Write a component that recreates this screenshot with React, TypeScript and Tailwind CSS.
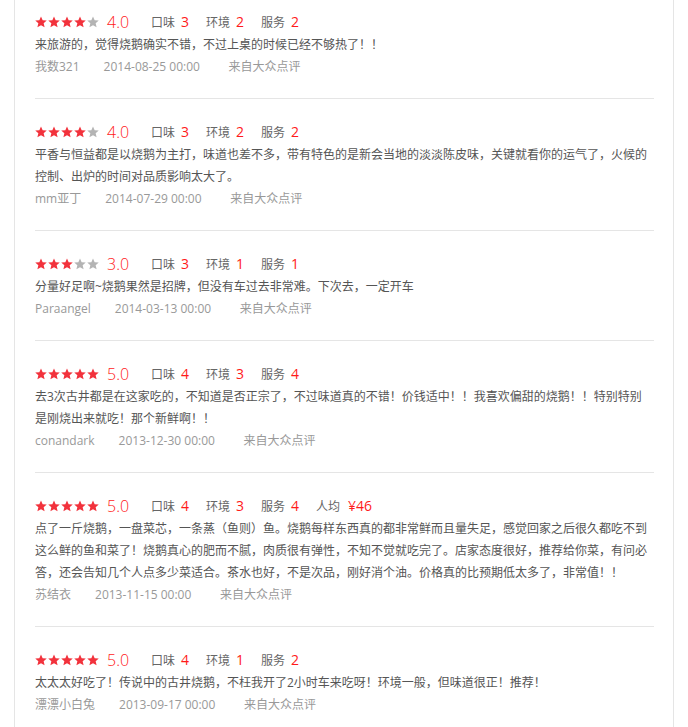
import React from "react";

type Review = {
  score: number;
  taste: number;
  env: number;
  service: number;
  avg?: string;
  lines: string[];
  author: string;
  date: string;
};

const reviews: Review[] = [
  {
    score: 4,
    taste: 3,
    env: 2,
    service: 2,
    lines: ["来旅游的，觉得烧鹅确实不错，不过上桌的时候已经不够热了！！"],
    author: "我数321",
    date: "2014-08-25 00:00",
  },
  {
    score: 4,
    taste: 3,
    env: 2,
    service: 2,
    lines: [
      "平香与恒益都是以烧鹅为主打，味道也差不多，带有特色的是新会当地的淡淡陈皮味，关键就看你的运气了，火候的",
      "控制、出炉的时间对品质影响太大了。",
    ],
    author: "mm亚丁",
    date: "2014-07-29 00:00",
  },
  {
    score: 3,
    taste: 3,
    env: 1,
    service: 1,
    lines: ["分量好足啊~烧鹅果然是招牌，但没有车过去非常难。下次去，一定开车"],
    author: "Paraangel",
    date: "2014-03-13 00:00",
  },
  {
    score: 5,
    taste: 4,
    env: 3,
    service: 4,
    lines: [
      "去3次古井都是在这家吃的，不知道是否正宗了，不过味道真的不错！价钱适中！！我喜欢偏甜的烧鹅！！特别特别",
      "是刚烧出来就吃！那个新鲜啊！！",
    ],
    author: "conandark",
    date: "2013-12-30 00:00",
  },
  {
    score: 5,
    taste: 4,
    env: 3,
    service: 4,
    avg: "¥46",
    lines: [
      "点了一斤烧鹅，一盘菜芯，一条蒸（鱼则）鱼。烧鹅每样东西真的都非常鲜而且量失足，感觉回家之后很久都吃不到",
      "这么鲜的鱼和菜了！烧鹅真心的肥而不腻，肉质很有弹性，不知不觉就吃完了。店家态度很好，推荐给你菜，有问必",
      "答，还会告知几个人点多少菜适合。茶水也好，不是次品，刚好消个油。价格真的比预期低太多了，非常值！！",
    ],
    author: "苏结衣",
    date: "2013-11-15 00:00",
  },
  {
    score: 5,
    taste: 4,
    env: 1,
    service: 2,
    lines: ["太太太好吃了！传说中的古井烧鹅，不枉我开了2小时车来吃呀！环境一般，但味道很正！推荐！"],
    author: "漂漂小白兔",
    date: "2013-09-17 00:00",
  },
];

function Star({ on }: { on: boolean }) {
  return (
    <svg width="12" height="12" viewBox="0 0 24 24" className="block">
      <path
        d="M12 0.8l3.3 7.6 8.2 0.7-6.2 5.4 1.9 8.1L12 18.3l-7.2 4.3 1.9-8.1L0.5 9.1l8.2-0.7z"
        fill={on ? "#f2323c" : "#b4b4b4"}
      />
    </svg>
  );
}

function Item({ label, value }: { label: string; value: string | number }) {
  return (
    <span className="inline-flex w-[55px] shrink-0 items-baseline whitespace-nowrap">
      <span className="text-[12px] text-[#666]">{label}</span>
      <span className="ml-[6px] text-[14px] text-[#ff1a1a]">{value}</span>
    </span>
  );
}

function ReviewBlock({ r, first }: { r: Review; first: boolean }) {
  return (
    <div
      className={
        (first ? "pt-[9px] " : "pt-[20px] ") +
        "pb-[20px] border-b border-[#e5e5e5]"
      }
    >
      <div className="flex h-[25px] items-center">
        <div className="flex gap-[1px]">
          {[0, 1, 2, 3, 4].map((i) => (
            <Star key={i} on={i < r.score} />
          ))}
        </div>
        <span className="ml-[8px] w-[44px] shrink-0 text-[16px] font-light leading-none text-[#ff1a1a]">
          {r.score.toFixed(1)}
        </span>
        <Item label="口味" value={r.taste} />
        <Item label="环境" value={r.env} />
        <Item label="服务" value={r.service} />
        {r.avg && (
          <span className="inline-flex items-baseline whitespace-nowrap">
            <span className="text-[12px] text-[#666]">人均</span>
            <span className="ml-[8px] text-[14px] text-[#ff1a1a]">{r.avg}</span>
          </span>
        )}
      </div>
      <div className="text-[12px] leading-[22px] text-[#555]">
        {r.lines.map((l, i) => (
          <div key={i} className="whitespace-nowrap">
            {l}
          </div>
        ))}
      </div>
      <div className="flex h-[22px] items-center text-[12px] text-[#999]">
        <span className="mr-[24px]">{r.author}</span>
        <span className="mr-[24px] inline-block w-[101px]">{r.date}</span>
        <span>来自大众点评</span>
      </div>
    </div>
  );
}

export default function App() {
  return (
    <div
      className="min-h-[727px] bg-white"
      style={{ fontFamily: '"Open Sans", "Noto Sans CJK SC", sans-serif' }}
    >
      <div className="ml-[14px] min-h-[727px] w-[660px] border-x border-[#e5e5e5] pl-[20px] pr-[19px]">
        {reviews.map((r, i) => (
          <ReviewBlock key={i} r={r} first={i === 0} />
        ))}
      </div>
    </div>
  );
}
